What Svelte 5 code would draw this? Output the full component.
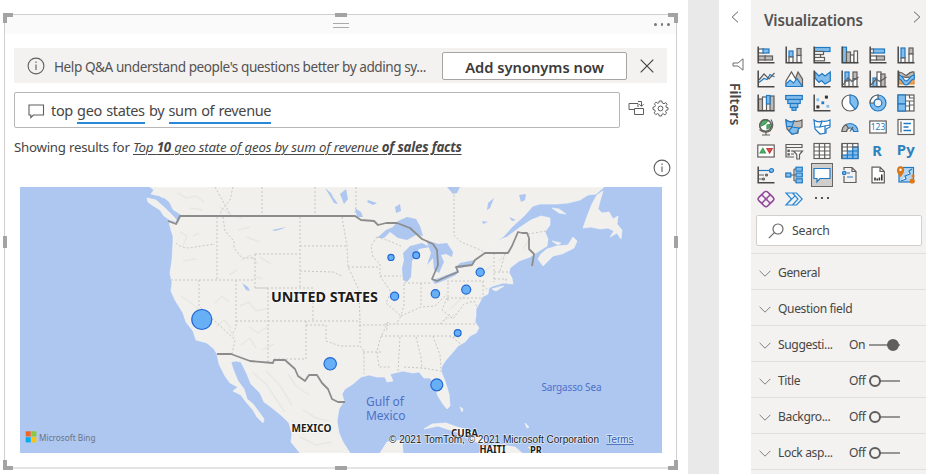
<script>
  const G = '#605e5c';
  const B = '#2079c3';
  const L = '#83bdec';
  const S = '#bebbb8';
  const W = '#fff';
  const O = '#e8862a';
  const r = (x, y, w, h, f = 'none', s = G) =>
    `<rect x="${x}" y="${y}" width="${w}" height="${h}" fill="${f}" stroke="${s}"/>`;
  const p = (d, s = G, f = 'none') => `<path d="${d}" stroke="${s}" fill="${f}"/>`;
  const c = (x, y, q, f = 'none', s = G) =>
    `<circle cx="${x}" cy="${y}" r="${q}" fill="${f}" stroke="${s}"/>`;
  const axis = '<path d="M1.2 .5V16.8H17.5" fill="none" stroke="#4a4846" stroke-width="1.5"/>';

  const icons = [
    { name: 'Stacked bar chart', art: r(1.5, 3, 5, 4, W) + r(6, 3, 6, 4, L, B) + r(1.5, 10, 7, 4, S) + r(8, 10, 7.5, 4, S) + axis },
    { name: 'Stacked column chart', art: r(4, 5, 4, 6, L, B) + r(4, 11, 4, 5.5, W) + r(12, 2.5, 4, 7, S) + r(12, 9.5, 4, 7, W) + axis },
    { name: 'Clustered bar chart', art: r(1.5, 1.5, 15.5, 4, L, B) + r(1.5, 5.5, 9, 3, W) + r(1.5, 8.5, 6, 3, W) + r(1.5, 11.5, 10, 3.3, W) + axis },
    { name: 'Clustered column chart', art: r(1.5, 1.2, 4, 15.3, L, B) + r(5.5, 6, 4, 10.5, S) + r(9.5, 9, 3.5, 7.5, W) + r(13, 5, 3.5, 11.5, W) + axis },
    { name: '100% stacked bar chart', art: r(1.5, 3, 3, 4, W) + r(4.5, 3, 11, 4, L, B) + r(1.5, 10, 6, 4, W) + r(7.5, 10, 8, 4, S) + axis },
    { name: '100% stacked column chart', art: r(4, 2, 4, 10, L, B) + r(4, 12, 4, 4.5, W) + r(12, 2, 4, 6, S) + r(12, 8, 4, 8.5, W) + axis },
    { name: 'Line chart', art: p('M2 12.5L7 8.5L10 9.5L13 4.5L17.5 7', B) + p('M2 10L7 4L12 9L17.5 3') + axis },
    { name: 'Area chart', art: p('M9 12L13 2L17.5 9V16Z', G, S) + p('M1 16V11L6.5 2L13 13', G, W) + p('M1 16.5V14L5 10L8.5 13L12 8.5L17.3 16.5Z', B, L) },
    { name: 'Stacked area chart', art: p('M2 2L6 6L9 3.5L12 6L17.3 2V11L12 14L8.5 10.5L6 12.5L2 8Z', B, L) + axis },
    { name: 'Line and stacked column chart', art: r(4, 2, 4, 9, L, B) + r(4, 11, 4, 5.5, W) + r(12, 2, 4, 7, S) + r(12, 9, 4, 7.5, W) + p('M2 15L7 8L11 11.5L17.5 7') + axis },
    { name: 'Line and clustered column chart', art: r(4, 8, 4, 8.5, L, B) + r(8, 2, 4, 14.5, W) + r(12, 4, 4, 12.5, S) + p('M2 15L7 9L11 11.5L17.5 7') + axis },
    { name: 'Ribbon chart', art: p('M2 9C6 10 8 14 17 9V14H2Z', O, '#efa55b') + p('M2 2C7 2 8 7 10 5C12 3 14 1 17 2V6C11 9 7 7 2 6Z', G, S) + p('M2 5C6 5 6 11 9 11C13 11 12 5 17.3 5V9C13 9 13 15 9 15C5 15 6 9 2 9Z', B, L) + axis },
    { name: 'Waterfall chart', art: r(1.5, 5, 4, 11.5, S) + r(5.5, 3, 4, 13.5, W) + r(13, 2, 4, 14.5, S) + r(9.5, 1.5, 3.5, 8.5, L, B) + axis },
    { name: 'Funnel', art: r(0.7, 1.5, 16.6, 4, L, B) + r(2.8, 5.5, 12.4, 4, L, B) + r(5.2, 9.5, 7.6, 4, L, B) + r(7, 13.5, 4, 2.8, L, B) },
    { name: 'Scatter chart', art: r(12.5, 2.2, 1.8, 1.8, '#333', '#333') + r(4, 12, 1.8, 1.8, '#333', '#333') + r(4, 5, 1.6, 1.6, L, L) + r(9, 8, 1.6, 1.6, L, B) + r(14, 11.5, 1.6, 1.6, L, L) + axis },
    { name: 'Pie chart', art: c(9, 9, 8, W) + p('M9 1A8 8 0 0 1 14 15.2L9 9Z', B, L) },
    { name: 'Donut chart', art: c(9, 9, 8, L, B) + p('M1 9A8 8 0 0 1 9 1V5A4 4 0 0 0 5 9Z', G, W) + c(9, 9, 3.8, '#f3f2f1', B) },
    { name: 'Treemap', art: r(1, 1, 16, 16, W) + p('M8 7H17M12.5 7V17M8 12H12.5M12.5 11H17M12.5 1V4H17') + r(1, 1, 7.5, 9, L, B) + r(1, 10, 7.5, 7, L, B) },
    { name: 'Map', art: c(8.5, 7.5, 5.8, W) + p('M4 4.5Q7 1 11 2.5L8 6L4 8ZM10 7L13 6.5Q13 10 10 11Z', '#3a9b52', '#57ae6b') + p('M14 1.5Q18 8 13 13Q7 16 2.5 11.5M9 14V17M5 17H13') + c(8.5, 7.5, 5.8) },
    { name: 'Filled map', art: p('M1 2Q5 5 9 3Q13 4 17 2V9L13 11V15L7 16L2 11Z', G, S) + p('M1 2Q5 5 9 3L7 8.5H1.5ZM7 9L14 10L12 15L7 16L4 13Z', B, L) },
    { name: 'Shape map', art: p('M1 2Q5 5 9 3Q13 4 17 2V9L13 11V15L7 16L2 11Z', B, W) + p('M9 3L7 9L12 8V15M2 9H7M12 8L17 7', B) },
    { name: 'Gauge', art: p('M1 13.5A8 8 0 0 1 17 13.5H12.5A3.5 3.5 0 0 0 5.5 13.5Z', B, L) + p('M1 13.5A8 8 0 0 1 5 6.5L7.5 10.5Q5.5 11.5 5.5 13.5Z', G, S) + p('M9 13.5L12 9') },
    { name: 'Card', art: r(0.8, 3, 16.4, 12, W) + '<text x="9" y="12.2" font-size="8.5" text-anchor="middle" fill="#2079c3" stroke="none">123</text>' },
    { name: 'Multi-row card', art: r(1, 1.5, 16, 15, W) + p('M4 3.5V14.5') + '<path d="M6.5 5.5H14M6.5 9H11.5M6.5 12.5H14" stroke="#2079c3" stroke-width="1.7"/>' },
    { name: 'KPI', art: r(0.8, 3, 16.4, 12, W) + p('M3 11L5.8 6.5L8.4 11Z', '#3a9b52', '#57ae6b') + p('M10 6.5H15.2L12.6 11Z', '#c43b3b', '#db5555') },
    { name: 'Slicer', art: p('M9 15H1V2.5H17V6M1 5.5H17M6 9H8M6 12H9') + r(3, 8.2, 1.2, 1.2) + r(3, 11.8, 1.2, 1.2) + p('M8.5 9H17.5L14.5 12.5V17H11.8V12.5Z', G, W) },
    { name: 'Table', art: r(1, 1.5, 16, 15, W) + p('M1 5H17M1 9H17M1 13H17M6.3 2V17M11.7 2V17') },
    { name: 'Matrix', art: r(1, 1.5, 16, 15, W) + r(11.7, 5, 5.3, 11.5, L, B) + r(6.3, 9, 5.4, 7.5, L, B) + r(1, 13, 5.3, 3.5, L, B) + p('M1 5H17M1 9H6.3M6.3 2V9M11.7 2V5') + p('M6.3 13H17M11.7 9H17', B) + p('M1 1.5H17M1 1.5V16.5') },
    { name: 'R script visual', art: '<text x="8" y="13.8" font-size="14.5" font-weight="700" text-anchor="middle" fill="#2d82bd" stroke="none">R</text>' },
    { name: 'Python visual', art: '<text x="8.8" y="13" font-size="15" font-weight="700" text-anchor="middle" fill="#2d82bd" stroke="none">Py</text>' },
    { name: 'Key influencers', art: p('M2 4.5H12', B) + p('M2 9H7M2 13H5') + c(14.5, 4.5, 2, L, B) + c(9.5, 9, 1, S) + c(6.5, 13, 1, S) + axis },
    { name: 'Decomposition tree', art: p('M6 9H12M9 3V15M9 3H12M9 15H12') + r(0.8, 7, 5, 4, L, B) + r(11, 1.2, 6.3, 4, L, B) + r(11, 7, 6.3, 4, L, B) + r(11, 12.8, 6.3, 4, L, B) },
    { name: 'Q&A', selected: true, art: p('M1 2.5H17V12.5H7L4 16V12.5H1Z', B, W) },
    { name: 'Smart narrative', art: p('M3 4V1.5H11L15 5.5V16.5H3V10M11 2V5.5H15', G) + c(3.2, 7, 1.7, L, B) + p('M5.5 7H9M6 11H12', B) },
    { name: 'Paginated report', art: p('M3 1.2H11L15.3 5.5V16.8H3ZM11 2V5.5H15', G, W) + '<path d="M6 14.5V11.5M8.2 14.5V12.5M10.4 14.5V11.5M12.8 14.5V8.5" stroke="#333" stroke-width="1.6"/>' },
    { name: 'ArcGIS Maps', art: r(2, 1.5, 14.5, 14.5, '#b5d6ee', B) + p('M15 3L12 5L13 8L8 10L9 13L4 15', B, '#fff') + p('M3.5 10Q-.8 5 1.2 2Q3.5 -.5 6 2Q7.8 5 3.5 10Z', '#d87518', '#e37715') + c(3.5, 3.8, 0.6, W, W) + c(15.2, 15, 2, '#e37715', '#e37715') + c(16, 10, 0.9, '#e37715', '#e37715') },
    { name: 'Power Apps', art: '<g stroke="#944b9d" fill="none" transform="rotate(45 9 9)"><rect x="3" y="3" width="6" height="6" rx="2"/><rect x="9" y="3" width="6" height="6" rx="2"/><rect x="3" y="9" width="6" height="6" rx="2"/><rect x="9" y="9" width="6" height="6" rx="2"/></g>' + p('M4.5 4.5L7 2.3Q9 .6 11 2.3L13.5 4.5M4.5 13.5L7 15.7Q9 17.4 11 15.7L13.5 13.5M4.5 4.5L1.5 7.5Q.4 9 1.5 10.5L4.5 13.5M13.5 4.5L16.5 7.5Q17.6 9 16.5 10.5L13.5 13.5', '#944b9d') },
    { name: 'Power Automate', art: p('M1 3H11.5L17.2 9L11.5 15H1L6.5 9ZM7.5 3L13 9L7.5 15M1 15L10 5.8', '#2b88d8') }
  ];

  const sections = [
    { label: 'General' },
    { label: 'Question field' },
    { label: 'Suggesti...', state: 'On' },
    { label: 'Title', state: 'Off' },
    { label: 'Backgro...', state: 'Off' },
    { label: 'Lock asp...', state: 'Off' }
  ];

  const bubbles = [
    [201.8, 319.5, 10], [330.2, 363.8, 6.2], [436.8, 384.8, 6], [391, 257.4, 3.1], [416.2, 255.2, 3.4],
    [394.6, 296.2, 4.1], [435.4, 293.8, 4.2], [480.2, 272.3, 4.1], [466.2, 289.6, 4.5], [457.7, 333, 3.4]
  ];

  const handles = ['tl', 'tc', 'tr', 'ml', 'mr', 'bl', 'bc', 'br'];
</script>

<div class="app">
  <main class="canvas">
    <section class="visual">
      {#each handles as h}<i class="handle {h}"></i>{/each}
      <header class="grip">
        <span class="bars"></span>
        <span class="more"><b></b><b></b><b></b></span>
      </header>
      <div class="notice">
        <svg class="info" viewBox="0 0 18 18"><circle cx="9" cy="9" r="7.9" /><path d="M9 7.5V13M9 4.6V6" /></svg>
        <span class="help">Help Q&amp;A understand people's questions better by adding sy...</span>
        <button class="add"><span>Add synonyms now</span></button>
        <svg class="close" viewBox="0 0 14 14"><path d="M.7.7L13.3 13.3M13.3.7L.7 13.3" /></svg>
      </div>
      <div class="ask">
        <div class="field">
          <svg class="bubble" viewBox="0 0 17 15"><path d="M1 1H15.5V11H5.3L2.8 13.6V11H1Z" /></svg>
          <span class="query">top <u>geo states</u> by <u>sum of revenue</u></span>
        </div>
        <svg class="tool" viewBox="0 0 17 17"><path d="M6.5 9.5H1V3.5H10V7M6.5 8.5H15.5V14.5H6.5ZM10 1.5H13.5V6M11.3 4.2L13.5 6.4L15.6 4.2" /></svg>
        <svg class="tool gear" viewBox="0 0 17 17">
          <path d="M7.2 1H9.8L10.3 3L12 3.7L13.8 2.6L15 4.4L13.8 6L14.2 7.2L16 7.7V9.8L14.1 10.3L13.6 11.5L14.6 13.2L12.9 14.8L11.2 13.7L9.9 14.3L9.5 16H7.2L6.7 14.1L5.5 13.6L3.8 14.6L2.2 12.9L3.2 11.2L2.7 9.9L1 9.5V7.2L2.9 6.7L3.4 5.4L2.4 3.8L4.1 2.2L5.8 3.3L6.9 2.8Z" />
          <circle cx="8.5" cy="8.5" r="2.4" />
        </svg>
      </div>
      <p class="showing">Showing results for <em>Top <b>10</b> geo state of geos by sum of revenue <b>of sales facts</b></em></p>
      <div class="inforow">
        <svg class="info" viewBox="0 0 18 18"><circle cx="9" cy="9" r="7.9" /><path d="M9 7.5V13M9 4.6V6" /></svg>
      </div>
      <svg class="map" viewBox="20 187 642 266">
        <rect x="20" y="187" width="642" height="266" fill="#adc7f1" stroke="none" />
        <g class="land">
          <path d="M150 187L154 190L151 194L160 196L166 200L167 205L170 208L178 213L181 217L178 223L169 222L171 230L173 236L173 242L172 260L170 273L172 283L171 291L175 300L183 313L186 322L193 331L196 340L207 343L214 349L217 354L219 364L225 376L230 383L238 387L233 391L241 395L246 402L253 410L257 417L263 423L264 419L259 412L253 404L247 399L244 389L238 381L233 369L231 362L236 361L241 362L246 372L251 384L260 393L264 402L271 407L282 416L289 423L292 434L291 442L300 453H350L343 442L339 433L337 421L339 409L344 401L342 394L345 389L353 384L361 377L369 375L377 377L385 377L387 382L393 381L390 374L403 371L413 373L419 372L424 378L430 378L434 384L438 396L443 404L447 409L450 406L449 394L445 381L441 371L442 366L446 360L453 352L458 346L465 342L470 336L476 333L479 328L475 322L476 315L476 309L480 302L482 297L488 294L489 288L493 286L503 283L513 284L512 278L509 273L510 268L519 261L530 257L539 251L547 246L548 239L545 232L550 225L550 218L541 216L531 220L519 228L507 237L494 242L503 237L513 226L524 216L533 206L540 204H557L568 203L580 200L588 195L596 194L604 187Z" />
          <path d="M147 198L156 200L166 209L174 217L178 222L170 220L164 216L160 210L152 205L148 202Z" />
          <path d="M603 191L597 195L592 204L588 214L583 228L591 227L600 229L608 228L614 231L610 237L617 233L621 239L622 230L617 224L618 216L613 219L609 212L602 213L598 209L600 201Z" />
          <path d="M538 259L543 266L553 256L562 254L574 248L577 241L573 237L568 245L557 246L547 249L541 254ZM552 208L559 209L566 214L559 213ZM552 241L561 243L558 245Z" />
          <path d="M424 429L432 424L446 423L457 427L465 429L477 435L487 441L484 443L469 441L465 435L453 431L438 426ZM485 447L500 445L515 447L522 453H479ZM380 453L387 442L402 440L403 453ZM528 447L540 449L535 453Z" />
          <path d="M492 289L499 287L504 286L496 291ZM460 407L463 409L462 412ZM525 423L529 427L527 428Z" />
        </g>
        <g class="relief">
          <path d="M178 193L186 198L196 196L204 202M190 208L203 210M180 232L187 236L183 246M193 236L199 233M183 261L196 259M181 296L191 303L201 311L207 323M215 303L222 296L229 302M216 327L224 320L231 328M241 261L250 255L258 264M260 257L271 264M253 276L263 279M240 306L249 302L256 311L269 308M249 327L258 333L270 325M229 329L235 338M241 345L250 338L256 348M262 350L274 344M252 372L266 384L276 399L285 412M266 371L279 384L292 405M288 374L296 386L309 395M303 410L316 418L329 421M220 207L231 215L242 218M246 237L260 242M238 230L250 227M229 275L237 270M450 309L461 299L472 289M443 321L456 314M486 270L493 265M499 261L509 250M523 249L530 238M300 437L316 445L332 442" />
        </g>
        <g class="water">
          <path d="M377 238L386 230L393 227L398 221L407 217L416 219L420 226L423 236L416 235L407 240L398 238L390 232L384 238Z" />
          <path d="M403 280L402 268L404 260L403 253L410 246L422 243L430 247L419 249L416 255L412 261L411 277L407 282Z" />
          <path d="M426 240L438 244L447 243L453 252L452 257L446 254L441 255L444 262L439 273L434 270L433 258L427 265L431 253Z" />
          <path d="M432 280L439 278L449 274L459 270L456 275L443 281L435 284ZM455 268L460 263L470 261L475 260L472 265L461 268ZM355 208L361 212L363 217L357 217ZM395 207L400 204L401 211L396 213ZM325 188L331 193L333 197L338 204L334 203L330 196ZM340 194L346 189L348 199L344 204ZM368 200L377 203L373 205L367 202ZM447 187H460L457 193L453 194ZM494 198L490 208L487 210L488 203ZM482 221L488 222L483 224ZM509 217L516 220L512 221ZM519 195L526 194L525 200L521 202ZM272 230L286 227L282 229L275 231ZM242 283L248 287L250 291L246 290ZM163 197L169 202L173 210L181 215L178 223L176 216L167 209Z" />
        </g>
        <g class="states">
          <path d="M176 243Q183 250 195 247L215 244M171 280H255M217 217V280M223 217L225 231L234 241V248L242 258H255M199 280V306L235 340L232 354M236 280V327L233 333M236 321H360M255 254V288H268M255 254H300M300 217V288M255 288H313V321M268 288V362M300 246H347M300 271L333 272L342 276M342 217L347 246L348 267L359 290L360 321M348 267H378M359 325H388L386 332M360 321V345M306 321V325H326V341L340 346L360 346M306 325V359H274M360 346L364 351V374M363 352H382M388 322L380 339L377 352L379 367H391M377 237L371 246L373 257L380 264V276L401 276M380 276L391 292L386 303L401 316L396 324M404 284V305L401 316M404 283H431M421 283V307M401 316L421 307L435 306L447 294M448 283V302M385 324L442 324L477 324M381 336H440L451 336L463 346M400 337L398 371M416 337L421 357L422 369M404 367L423 368L441 371M433 336L440 355L441 369M447 281H484M447 298H483M447 298L442 310L453 319L464 304L474 301M474 301L478 309M483 281V298M483 285L488 290M494 253V282M494 272H508M494 279H507M500 271L505 254M506 279V286M377 237L392 242L401 246" />
          <path d="M233 187L230 200L221 211V217M215 187L225 205L231 216M262 187V216M315 187V216M356 187V205L355 216M454 187V235L461 242L478 249L486 253M440 324L451 313M459 337L450 337M528 234L546 231" />
        </g>
        <g class="borders">
          <path d="M168 221L176 224L180 216H355L361 220L374 221L378 225L386 223L397 223L410 228L422 239L433 244L437 250L438 265L432 279L437 281L448 276L458 272L456 267L472 265L475 260L485 253H508L512 246L518 232L522 233L527 233L529 238V249L534 254L532 266M217 354H231L250 361L273 363L274 360H285L295 369L298 376L305 381L309 375H317L322 383L328 389L332 399L338 402H345" />
        </g>
        {#each bubbles as [x, y, q]}<circle class="dot" cx={x} cy={y} r={q} />{/each}
        <g class="country">
          <text x="271" y="302" font-size="14.5" textLength="107" lengthAdjust="spacingAndGlyphs">UNITED STATES</text>
          <text x="291.5" y="432" font-size="10.5" textLength="40" lengthAdjust="spacingAndGlyphs">MEXICO</text>
          <text x="451" y="437" font-size="10" textLength="27" lengthAdjust="spacingAndGlyphs">CUBA</text>
          <text x="479.5" y="452.5" font-size="10" textLength="26" lengthAdjust="spacingAndGlyphs">HAITI</text>
          <text x="530" y="454" font-size="10" textLength="12" lengthAdjust="spacingAndGlyphs">PR</text>
        </g>
        <g class="sea">
          <text x="366" y="406" font-size="12" textLength="38">Gulf of</text>
          <text x="366" y="420" font-size="12" textLength="39.5">Mexico</text>
          <text x="541.5" y="391" font-size="10" textLength="60">Sargasso Sea</text>
        </g>
        <g stroke="none">
          <path d="M25.7 431.3H30.7V436.5H25.7Z" fill="#f26522" /><path d="M31.3 431.3H36.4V436.5H31.3Z" fill="#8dc63f" />
          <path d="M25.7 437.2H30.7V442.4H25.7Z" fill="#00aeef" /><path d="M31.3 437.2H36.4V442.4H31.3Z" fill="#ffc20e" />
        </g>
        <text class="bing" x="39" y="440.5" textLength="56.5" lengthAdjust="spacingAndGlyphs">Microsoft Bing</text>
        <text class="credit" x="389" y="443" textLength="210" lengthAdjust="spacingAndGlyphs">© 2021 TomTom, © 2021 Microsoft Corporation</text>
        <text class="credit terms" x="606.5" y="443" textLength="27" lengthAdjust="spacingAndGlyphs">Terms</text>
        <path d="M606.5 444.5H634" stroke="#3c62b5" stroke-width=".8" />
      </svg>
    </section>
  </main>

  <aside class="filters">
    <svg class="back" viewBox="0 0 8 12"><path d="M7 .7L1.2 6L7 11.3" /></svg>
    <svg class="funnel" viewBox="0 0 12 13"><path d="M11 .8V12.2L6 8H1V5H6Z" /></svg>
    <span>Filters</span>
  </aside>

  <aside class="pane">
    <header>
      <h2>Visualizations</h2>
      <svg viewBox="0 0 8 12"><path d="M1 .7L6.8 6L1 11.3" /></svg>
    </header>
    <div class="gallery">
      {#each icons as icon}
        <span class="cell" class:selected={icon.selected} aria-label={icon.name}>
          <svg viewBox="0 0 18 18">{@html icon.art}</svg>
        </span>
      {/each}
      <span class="cell dots"><b></b><b></b><b></b></span>
    </div>
    <div class="search">
      <svg viewBox="0 0 16 16"><circle cx="10" cy="6" r="5" /><path d="M6.3 9.7L.8 15.2" /></svg>
      <span>Search</span>
    </div>
    <div class="sections">
      {#each sections as s}
        <div class="row">
          <svg class="chev" viewBox="0 0 12 7"><path d="M.6.8L6 6.2L11.4.8" /></svg>
          <span class="label">{s.label}</span>
          {#if s.state}
            <span class="state">{s.state}</span>
            <span class="toggle" class:on={s.state === 'On'}></span>
          {/if}
        </div>
      {/each}
      <div class="row"></div>
    </div>
  </aside>
</div>

<style>
  .app { display: flex; width: 926px; height: 474px; overflow: hidden; background: #e9e9e9; color: #484644; font-family: 'Noto Sans', 'Open Sans', sans-serif; }
  svg { display: block; flex: none; fill: none; stroke: #605e5c; }
  .canvas { box-sizing: border-box; width: 688px; height: 474px; padding: 14px 11px 5px 4px; background: #fff; margin-right: 31px; }
  .visual { position: relative; box-sizing: border-box; height: 455px; width: 673px; border: 1px solid #cfcfcf; border-bottom: 2px solid #e4e4e4; }
  .handle { position: absolute; box-sizing: border-box; width: 10px; height: 10px; border: 0 solid #a3a3a3; }
  .tl { left: -2px; top: -2px; border-width: 4px 0 0 4px; }
  .tr { right: -2px; top: -2px; border-width: 4px 4px 0 0; }
  .bl { left: -2px; bottom: -3px; border-width: 0 0 4px 4px; }
  .br { right: -2px; bottom: -3px; border-width: 0 4px 4px 0; }
  .tc { left: 330px; top: -2px; width: 12px; height: 4px; border-width: 4px 0 0; }
  .bc { left: 330px; bottom: -3px; width: 12px; height: 4px; border-width: 4px 0 0; }
  .ml { left: -2px; top: 221px; width: 4px; height: 12px; border-width: 0 0 0 4px; }
  .mr { right: -2px; top: 221px; width: 4px; height: 12px; border-width: 0 0 0 4px; }
  .grip { display: flex; height: 19px; background: #fafafa; }
  .bars { width: 16px; height: 3px; margin: 8px 0 0 328px; border: solid #aaa; border-width: 1px 0; }
  .more { display: flex; gap: 4px; margin: 8px 0 0 305px; }
  .more b { width: 2.5px; height: 2.5px; border-radius: 2px; background: #777; }
  .notice { display: flex; align-items: center; box-sizing: border-box; width: 653px; height: 35px; margin: 14px 0 0 9px; padding-left: 13px; background: #f3f2f1; }
  .info { width: 18px; height: 18px; stroke-width: 1.1; }
  .help { width: 388px; margin-left: 9px; padding-top: 1px; font-size: 13.6px; letter-spacing: -.45px; white-space: nowrap; color: #555351; }
  .add { box-sizing: border-box; width: 185px; height: 28px; padding: 3px 0 0; border: 1px solid #a6a5a4; border-radius: 2px; background: #fff; color: #3b3a39; font: 600 14.7px 'Noto Sans', sans-serif; }
  .close { width: 14px; height: 14px; margin: 1px 0 0 13px; stroke: #444; stroke-width: 1.2; }
  .ask { display: flex; align-items: center; margin: 9px 0 0 9px; height: 36px; }
  .field { display: flex; align-items: center; box-sizing: border-box; width: 606px; height: 36px; padding-left: 13px; border: 1px solid #b8b6b4; border-radius: 2px; }
  .bubble { width: 17px; height: 15px; margin-top: 2px; stroke-width: 1.1; }
  .query { margin-left: 6px; padding-top: 1px; font-size: 14.5px; letter-spacing: -.35px; word-spacing: .8px; line-height: 20px; white-space: nowrap; }
  .query u { display: inline-block; height: 24px; margin-top: 3px; text-decoration: none; border-bottom: 2px solid #2b88d8; box-sizing: border-box; }
  .tool { width: 17px; height: 17px; margin: -4px 0 0 8px; stroke-width: 1; }
  .gear { margin-left: 7px; }
  .showing { height: 22px; margin: 8px 0 0 9px; font-size: 13.3px; line-height: 22px; letter-spacing: -.28px; word-spacing: .2px; white-space: nowrap; }
  .showing em { text-decoration: underline; text-underline-offset: 2px; text-decoration-thickness: 1px; letter-spacing: -.23px; }
  .inforow { display: flex; justify-content: flex-end; padding: 1px 5px 0 0; height: 27px; box-sizing: border-box; }
  .map { width: 642px; height: 266px; margin: 2px 0 0 15px; font-family: 'Noto Sans', sans-serif; }
  .land path { fill: #f1f0ec; stroke: #f8f7f4; stroke-width: .6; }
  .relief { stroke: #dddcd6; stroke-width: 1.5; opacity: .4; stroke-linejoin: round; }
  .water path { fill: #adc7f1; stroke: none; }
  .states { stroke: #c8c6c3; stroke-width: 1; stroke-dasharray: 2 2; }
  .borders { stroke: #8c8c8c; stroke-width: 1.8; stroke-linejoin: round; }
  .dot { fill: #67b0f5; stroke: #2268d5; stroke-width: 1.2; }
  .country { fill: #1c1c1c; stroke: #fff; stroke-width: 1.2px; paint-order: stroke; font-weight: 700; }
  .sea { fill: #4f70c8; stroke: none; }
  .bing { fill: #6e7380; stroke: none; font-size: 9.5px; }
  .credit { fill: #1b1b1b; stroke: #ffffffa0; stroke-width: 1.4px; paint-order: stroke; font-family: 'Liberation Sans', sans-serif; font-size: 10.8px; }
  .terms { fill: #3056ae; }
  .filters { display: flex; flex-direction: column; align-items: center; width: 32px; background: #fff; }
  .back { width: 8px; height: 12px; margin-top: 11px; }
  .funnel { width: 12px; height: 13px; margin: 35px 0 0 5px; stroke-width: .9; }
  .filters span { margin-top: 12px; writing-mode: vertical-rl; font-size: 14px; line-height: 20px; font-weight: 600; letter-spacing: 0; margin-right: 1px; }
  .pane { width: 175px; background: #f3f2f1; }
  .pane header { display: flex; align-items: center; justify-content: space-between; height: 42px; box-sizing: border-box; padding: 0 5px 3px 13px; }
  .pane header svg { width: 8px; height: 12px; margin-top: -5px; }
  h2 { margin: 0; font-size: 15.2px; font-weight: 600; letter-spacing: -.22px; color: #555351; }
  .gallery { display: grid; grid-template-columns: repeat(6, 28px); grid-auto-rows: 24px; margin: 1px 0 0 1px; }
  .cell { display: flex; align-items: center; justify-content: center; }
  .cell svg { width: 18px; height: 18px; stroke-width: 1.2; font-family: 'Noto Sans', sans-serif; overflow: visible; }
  .selected { margin: 1px 4px; outline: 1.5px solid #666; background: #d0cecc; z-index: 1; }
  .dots { gap: 4px; padding-bottom: 2px; }
  .dots b { width: 2px; height: 2px; background: #555; }
  .search { display: flex; align-items: center; box-sizing: border-box; width: 166px; height: 31px; margin: 4px 0 0 5px; padding-left: 11px; border: 1px solid #d2d0ce; border-radius: 2px; background: #fff; font-size: 12.3px; letter-spacing: -.2px; }
  .search svg { width: 16px; height: 16px; margin-right: 8px; stroke-width: 1.1; }
  .sections { margin-top: 7px; }
  .row { display: flex; align-items: center; box-sizing: border-box; height: 36px; padding-left: 8px; border-top: 1px solid #e1dfdd; font-size: 12.1px; letter-spacing: -.38px; padding-top: 2px; }
  .chev { width: 12px; height: 7px; margin: 2px 7px 0 0; stroke: #807e7c; }
  .label { width: 71px; white-space: nowrap; }
  .state { width: 20px; }
  .toggle { position: relative; width: 31px; height: 2px; background: #979593; }
  .toggle::before { content: ''; position: absolute; box-sizing: border-box; left: 0; top: -5px; width: 12px; height: 12px; border: 2px solid #605e5c; border-radius: 50%; background: #f3f2f1; }
  .toggle.on::before { left: 18px; background: #605e5c; }
</style>
